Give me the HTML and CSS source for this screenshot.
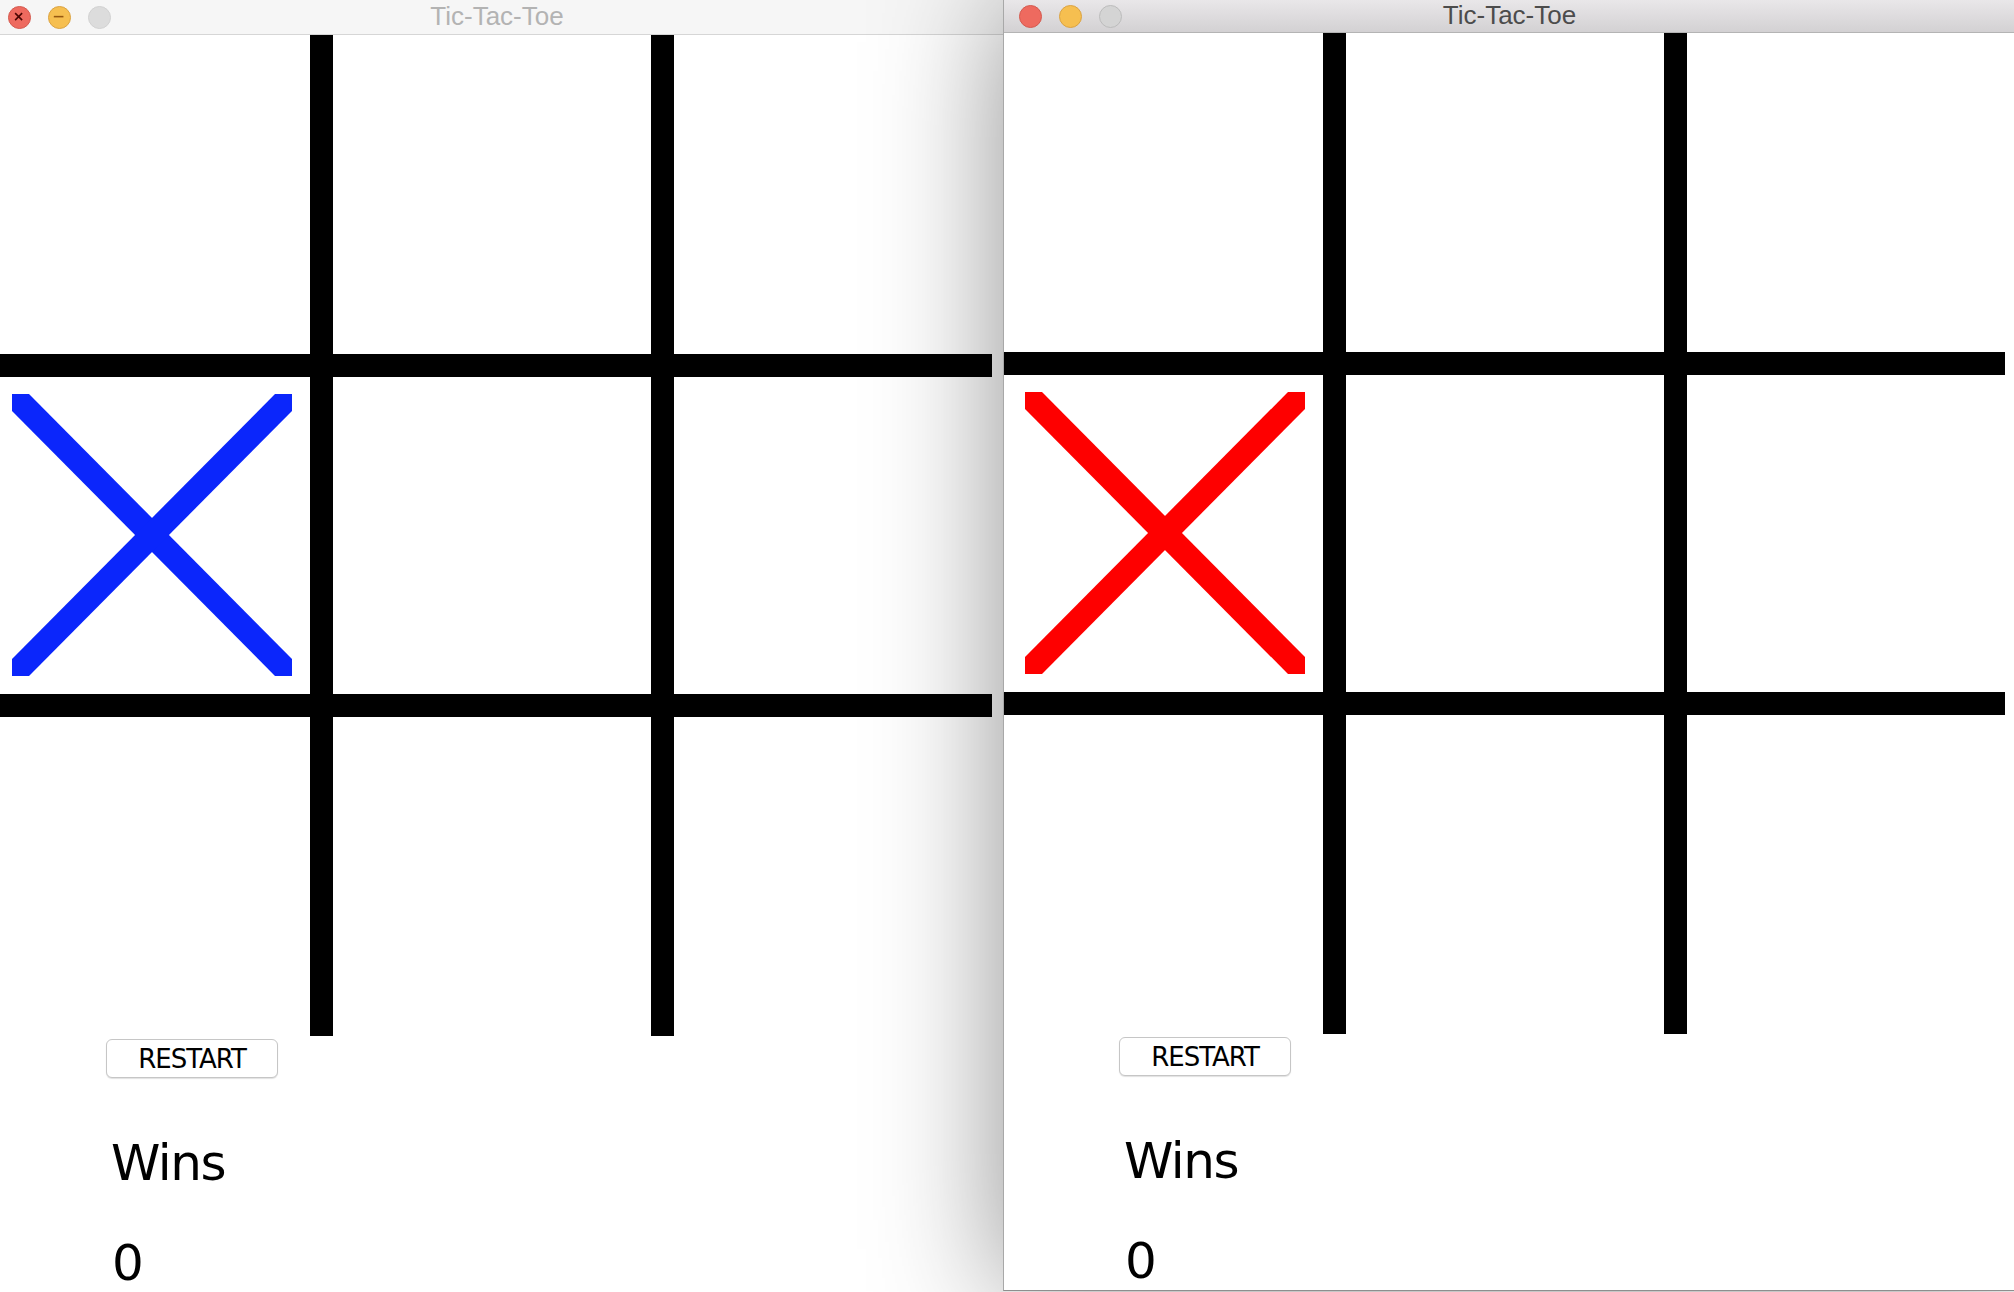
FILE: index.html
```html
<!DOCTYPE html>
<html lang="en">
<head>
<meta charset="utf-8">
<title>Tic-Tac-Toe</title>
<link rel="stylesheet" href="styles.css">
</head>
<body>
<div class="desktop">

  <section class="window window--back">
    <header class="titlebar titlebar--inactive">
      <div class="lights">
        <span class="light light--close">
          <svg viewBox="0 0 24 24" width="23" height="23"><path d="M7 7 L15 15 M15 7 L7 15" /></svg>
        </span>
        <span class="light light--min">
          <svg viewBox="0 0 24 24" width="23" height="23"><path d="M5.5 11 H16.5" /></svg>
        </span>
        <span class="light light--zoom"></span>
      </div>
      <div class="title">Tic-Tac-Toe</div>
      <div class="titlebar-spacer"></div>
    </header>
    <main class="content">
      <div class="board">
        <div class="cell"></div>
        <div class="cell"></div>
        <div class="cell"></div>
        <div class="cell cell--mark">
          <svg class="mark mark--blue" viewBox="0 0 280 282" width="280" height="282">
            <polygon points="0,0 17,0 280,265 280,282 263,282 0,17" />
            <polygon points="280,0 280,17 17,282 0,282 0,265 263,0" />
          </svg>
        </div>
        <div class="cell"></div>
        <div class="cell"></div>
        <div class="cell"></div>
        <div class="cell"></div>
        <div class="cell"></div>
      </div>
      <div class="panel">
        <button class="restart" type="button">RESTART</button>
        <div class="wins-label">Wins</div>
        <div class="wins-count">0</div>
      </div>
    </main>
  </section>

  <section class="window window--front">
    <header class="titlebar titlebar--active">
      <div class="lights">
        <span class="light light--close"></span>
        <span class="light light--min"></span>
        <span class="light light--zoom"></span>
      </div>
      <div class="title">Tic-Tac-Toe</div>
      <div class="titlebar-spacer"></div>
    </header>
    <main class="content">
      <div class="board">
        <div class="cell"></div>
        <div class="cell"></div>
        <div class="cell"></div>
        <div class="cell cell--mark">
          <svg class="mark mark--red" viewBox="0 0 280 282" width="280" height="282">
            <polygon points="0,0 17,0 280,265 280,282 263,282 0,17" />
            <polygon points="280,0 280,17 17,282 0,282 0,265 263,0" />
          </svg>
        </div>
        <div class="cell"></div>
        <div class="cell"></div>
        <div class="cell"></div>
        <div class="cell"></div>
        <div class="cell"></div>
      </div>
      <div class="panel">
        <button class="restart" type="button">RESTART</button>
        <div class="wins-label">Wins</div>
        <div class="wins-count">0</div>
      </div>
    </main>
  </section>

</div>
</body>
</html>
```

FILE: styles.css
```css
html, body {
  margin: 0;
  padding: 0;
  background: #ffffff;
}

body {
  width: 2014px;
  height: 1292px;
  overflow: hidden;
  font-family: "DejaVu Sans", "Liberation Sans", sans-serif;
  color: #000;
}

.desktop {
  position: relative;
  width: 2014px;
  height: 1292px;
  overflow: hidden;
}

/* ---------- windows ---------- */
.window {
  position: absolute;
  top: 0;
  background: #ffffff;
  display: flex;
  flex-direction: column;
}

.window--back {
  left: -9px;
  width: 1012px;
  height: 1320px;
}

.window--front {
  left: 1003px;
  width: 1012px;
  height: 1291px;
  border-left: 1px solid #a8a8a8;
  border-bottom: 1px solid #8e8e8e;
  box-sizing: border-box;
  box-shadow: 0 0 120px rgba(0, 0, 0, 0.44);
}

/* ---------- title bars ---------- */
.titlebar {
  display: grid;
  grid-template-columns: 1fr auto 1fr;
  align-items: center;
  box-sizing: border-box;
  flex: none;
}

.titlebar--inactive {
  height: 35px;
  background: #f6f6f6;
  border-bottom: 1px solid #d6d6d6;
}

.titlebar--inactive .lights {
  padding-left: 17px;
}

.titlebar--active {
  height: 33px;
  background: linear-gradient(#e9e7e9, #d3d1d3);
  border-bottom: 1px solid #b4b4b4;
}

.titlebar--active .lights {
  padding-left: 15px;
}

.title {
  font-family: "Liberation Sans", Arial, sans-serif;
  font-size: 26px;
  line-height: 30px;
  padding-bottom: 2px;
}

.titlebar--inactive .title {
  color: #b3b3b3;
}

.titlebar--active .title {
  color: #4c4c4c;
}

.lights {
  display: flex;
  gap: 17px;
  align-items: center;
}

.light {
  width: 23px;
  height: 23px;
  border-radius: 50%;
  box-sizing: border-box;
  display: block;
}

.light svg {
  display: block;
  width: 21px;
  height: 21px;
  fill: none;
  stroke-width: 1.8;
}

.light--close {
  background: #ee6a5f;
  border: 1px solid #d45a4f;
}

.light--close svg {
  stroke: #4a0603;
}

.light--min {
  background: #f6bf50;
  border: 1px solid #dba342;
}

.light--min svg {
  stroke: #965810;
}

.titlebar--inactive .light--zoom {
  background: #dcdcdc;
  border: 1px solid #d2d2d2;
}

.titlebar--active .light--zoom {
  background: #d4d4d4;
  border: 1px solid #bcbcbc;
}

/* ---------- board ---------- */
.content {
  display: flex;
  flex-direction: column;
}

.board {
  display: grid;
  grid-template-columns: 319px 318px 318px;
  grid-template-rows: 319px 317px 319px;
  gap: 23px;
  width: 1001px;
  height: 1001px;
  background: #000;
}

.cell {
  background: #fff;
}

.cell--mark {
  padding: 17px 0 0 21px;
  box-sizing: border-box;
}

.mark {
  display: block;
}

.mark--blue {
  fill: #0b26fb;
}

.mark--red {
  fill: #fe0000;
}

/* ---------- bottom panel ---------- */
.panel {
  display: flex;
  flex-direction: column;
  align-items: flex-start;
  padding-left: 115px;
}

.restart {
  margin-top: 3px;
  width: 172px;
  height: 39px;
  box-sizing: border-box;
  background: #fff;
  border: 1px solid #c6c6c6;
  border-radius: 6px;
  box-shadow: 0 1px 1px rgba(0, 0, 0, 0.12);
  font-family: "DejaVu Sans", sans-serif;
  font-size: 26px;
  letter-spacing: -1px;
  color: #000;
  padding: 1px 0 0 0;
  display: flex;
  align-items: center;
  justify-content: center;
  line-height: 30px;
}

.wins-label {
  margin-top: 55px;
  margin-left: 5px;
  font-size: 50px;
  line-height: 60px;
  letter-spacing: -1.5px;
}

.wins-count {
  margin-top: 40px;
  margin-left: 6px;
  font-size: 50px;
  line-height: 60px;
}
```
